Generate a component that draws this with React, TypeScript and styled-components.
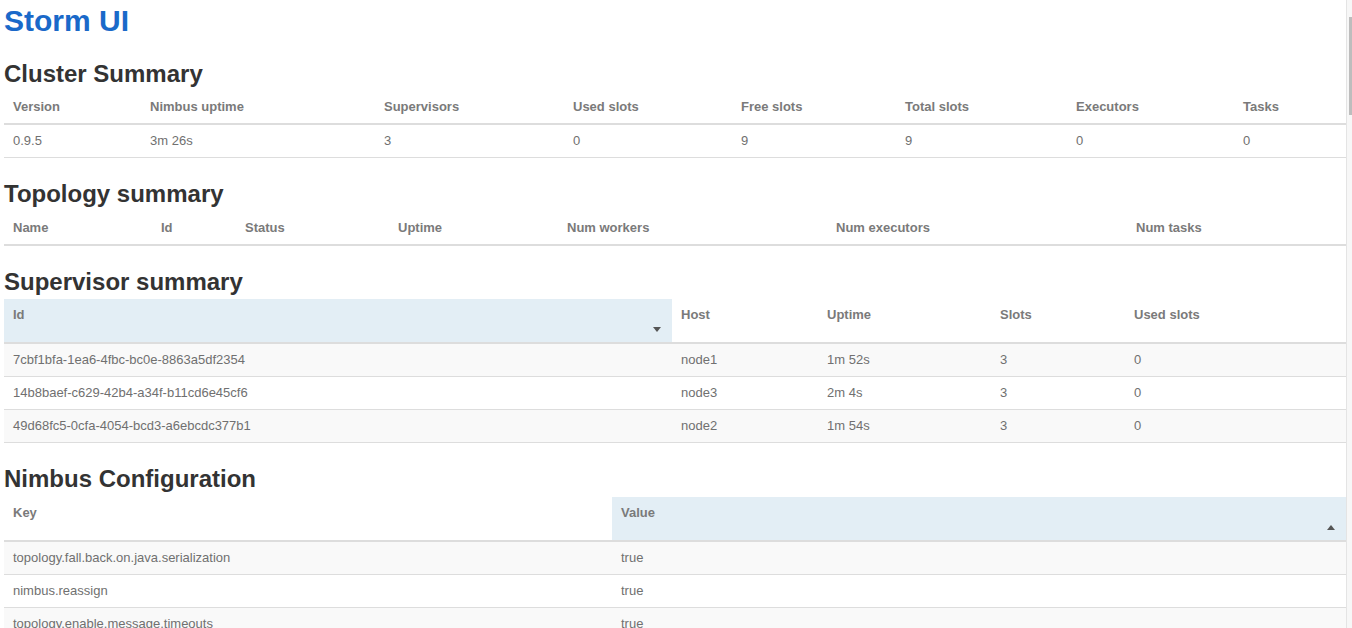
import React from 'react'
import styled, { createGlobalStyle } from 'styled-components'

const GlobalStyle = createGlobalStyle`
    html, body {
        margin: 0;
        padding: 0;
        background: #fff;
    }

    body {
        font-family: "Liberation Sans", Arial, Helvetica, sans-serif;
        font-size: 13px;
        color: #777;
    }
`

const Page = styled.div`
    padding: 3px 6px 0 4px;
`

// the browser scrollbar of the page, drawn over the right edge
const ScrollTrack = styled.div`
    position: fixed;
    top: 0;
    right: 0;
    width: 5px;
    height: 100vh;
    background: #f7f7f7;
    border-left: 1px solid #e4e4e4;
`

const ScrollThumb = styled.div`
    position: absolute;
    top: 17px;
    right: 0;
    width: 3px;
    height: 98px;
    background: #bdbdbd;
`

const Title = styled.h1`
    margin: 0;
    font-size: 30px;
    line-height: 35px;
    font-weight: bold;
    color: #1a69c9;
`

const SectionTitle = styled.h2`
    margin: 23px 0 4px;
    font-size: 24px;
    line-height: 1.1;
    font-weight: bold;
    color: #333;
`

const Table = styled.table`
    width: 100%;
    table-layout: fixed;
    border-collapse: collapse;
    border-spacing: 0;
`

const HeadCell = styled.th<{ $sorted?: boolean }>`
    position: relative;
    text-align: left;
    vertical-align: top;
    font-weight: bold;
    color: #7a7a7a;
    line-height: 16px;
    padding: 8px 8px ${p => (p.$sorted ? '19px' : '8px')} 9px;
    border-bottom: 2px solid #ddd;
    background: ${p => (p.$sorted ? '#e3eef5' : 'transparent')};
`

const SortArrow = styled.span<{ $dir: 'asc' | 'desc' }>`
    position: absolute;
    right: 11px;
    bottom: 10px;
    width: 0;
    height: 0;
    border-left: 4px solid transparent;
    border-right: 4px solid transparent;
    ${p =>
        p.$dir === 'asc'
            ? 'border-bottom: 5px solid #555;'
            : 'border-top: 5px solid #555;'}
`

const Row = styled.tr<{ $striped?: boolean }>`
    background: ${p => (p.$striped ? '#f9f9f9' : '#fff')};
`

const Cell = styled.td`
    padding: 8px 8px 8px 9px;
    line-height: 16px;
    color: #707070;
    border-bottom: 1px solid #ddd;
    white-space: nowrap;
    overflow: hidden;
`

interface IColumn {
    label: string
    width: number
    sort?: 'asc' | 'desc'
}

interface IDataTableProps {
    columns: IColumn[]
    rows: string[][]
    striped?: boolean
}

const DataTable = ({ columns, rows, striped }: IDataTableProps) => {
    return (
        <Table>
            <colgroup>
                {columns.map(col => (
                    <col key={col.label} style={{ width: col.width }} />
                ))}
            </colgroup>
            <thead>
                <tr>
                    {columns.map(col => (
                        <HeadCell key={col.label} $sorted={!!col.sort}>
                            {col.label}
                            {col.sort && <SortArrow $dir={col.sort} />}
                        </HeadCell>
                    ))}
                </tr>
            </thead>
            <tbody>
                {rows.map((row, i) => (
                    <Row key={i} $striped={striped && i % 2 === 0}>
                        {row.map((value, j) => (
                            <Cell key={j}>{value}</Cell>
                        ))}
                    </Row>
                ))}
            </tbody>
        </Table>
    )
}

const clusterColumns: IColumn[] = [
    { label: 'Version', width: 137 },
    { label: 'Nimbus uptime', width: 234 },
    { label: 'Supervisors', width: 189 },
    { label: 'Used slots', width: 168 },
    { label: 'Free slots', width: 164 },
    { label: 'Total slots', width: 171 },
    { label: 'Executors', width: 167 },
    { label: 'Tasks', width: 112 },
]

const topologyColumns: IColumn[] = [
    { label: 'Name', width: 148 },
    { label: 'Id', width: 84 },
    { label: 'Status', width: 153 },
    { label: 'Uptime', width: 169 },
    { label: 'Num workers', width: 269 },
    { label: 'Num executors', width: 300 },
    { label: 'Num tasks', width: 219 },
]

const supervisorColumns: IColumn[] = [
    { label: 'Id', width: 668, sort: 'desc' },
    { label: 'Host', width: 146 },
    { label: 'Uptime', width: 173 },
    { label: 'Slots', width: 134 },
    { label: 'Used slots', width: 221 },
]

const supervisors = [
    ['7cbf1bfa-1ea6-4fbc-bc0e-8863a5df2354', 'node1', '1m 52s', '3', '0'],
    ['14b8baef-c629-42b4-a34f-b11cd6e45cf6', 'node3', '2m 4s', '3', '0'],
    ['49d68fc5-0cfa-4054-bcd3-a6ebcdc377b1', 'node2', '1m 54s', '3', '0'],
]

const configColumns: IColumn[] = [
    { label: 'Key', width: 608 },
    { label: 'Value', width: 734, sort: 'asc' },
]

const nimbusConfig = [
    ['topology.fall.back.on.java.serialization', 'true'],
    ['nimbus.reassign', 'true'],
    ['topology.enable.message.timeouts', 'true'],
]

function App() {
    return (
        <Page>
            <GlobalStyle />
            <Title>Storm UI</Title>

            <SectionTitle>Cluster Summary</SectionTitle>
            <DataTable
                columns={clusterColumns}
                rows={[['0.9.5', '3m 26s', '3', '0', '9', '9', '0', '0']]}
            />

            <SectionTitle>Topology summary</SectionTitle>
            <DataTable columns={topologyColumns} rows={[]} />

            <SectionTitle>Supervisor summary</SectionTitle>
            <DataTable columns={supervisorColumns} rows={supervisors} striped />

            <SectionTitle>Nimbus Configuration</SectionTitle>
            <DataTable columns={configColumns} rows={nimbusConfig} striped />

            <ScrollTrack>
                <ScrollThumb />
            </ScrollTrack>
        </Page>
    )
}

export default App
